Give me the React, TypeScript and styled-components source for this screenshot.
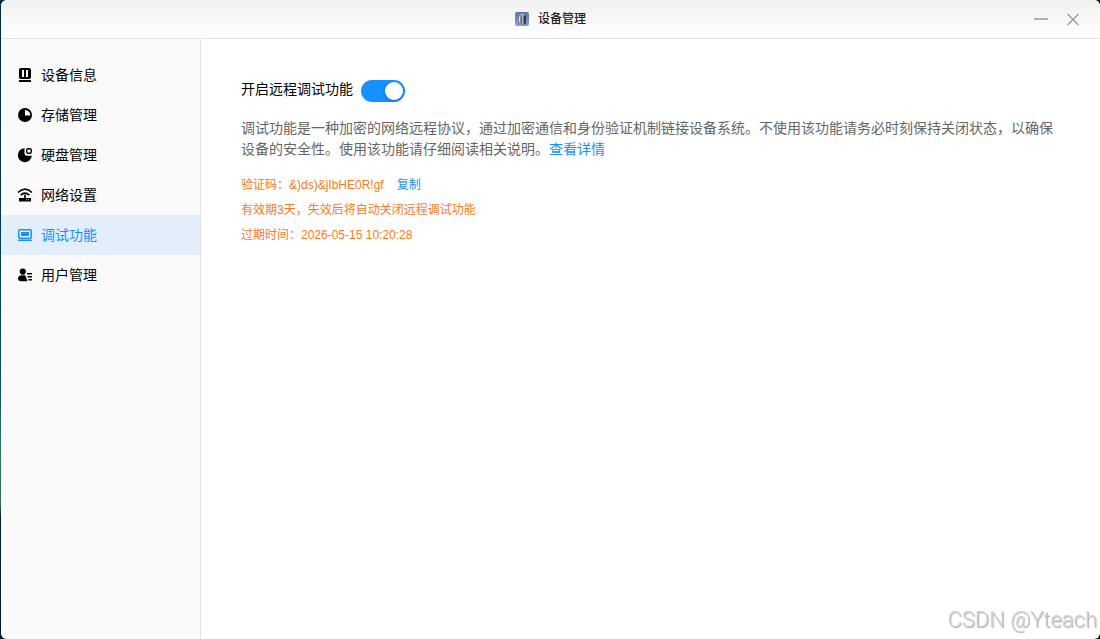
import React, { useState } from "react";
import styled, { createGlobalStyle } from "styled-components";

const GlobalStyle = createGlobalStyle`
  * { box-sizing: border-box; }
  body {
    margin: 0;
    font-family: "Liberation Sans", "Noto Sans CJK SC", sans-serif;
    font-size: 14px;
    color: #000;
  }
  button { font: inherit; border: 0; padding: 0; background: none; cursor: pointer; }
`;

const Desktop = styled.div`
  min-height: 100vh;
  padding-left: 1px;
  display: flex;
  background: linear-gradient(#002b40 0%, #00394c 35%, #0b5560 60%, #2b7566 70%, #2f6f4c 79%, #001f33 81%, #001c30 100%);
`;

const Window = styled.div`
  flex: 1;
  display: flex;
  flex-direction: column;
  overflow: hidden;
  border-radius: 6px;
  background: #fff;
`;

const TitleBar = styled.header`
  display: grid;
  grid-template-columns: 1fr auto 1fr;
  align-items: center;
  height: 39px;
  padding: 0 19px;
  border-bottom: 1px solid #e2e2e2;
  background: linear-gradient(#f1f1f1, #fff);
`;

const Title = styled.h1`
  grid-column: 2;
  display: flex;
  align-items: center;
  gap: 9px;
  margin: 0;
  font-size: 12px;
  line-height: 18px;
  font-weight: 500;
  color: #222;
`;

const WindowActions = styled.div`
  display: flex;
  justify-content: flex-end;
  gap: 16px;
`;

const WindowButton = styled.button`
  display: flex;
  width: 16px;
  height: 16px;
  color: #999;
`;

const Body = styled.div`
  flex: 1;
  display: flex;
`;

const Sidebar = styled.nav`
  flex: 0 0 200px;
  padding-top: 16px;
  border-right: 1px solid #e2e2e2;
  background: #fafafa;
`;

const NavItem = styled.button<{ $active: boolean }>`
  display: flex;
  align-items: center;
  gap: 8px;
  width: 100%;
  height: 40px;
  && { padding-left: 16px; }
  line-height: 20px;
  color: ${(p) => (p.$active ? "#1890ff" : "#000")};
  && { background: ${(p) => (p.$active ? "#e3eefb" : "transparent")}; }
`;

const Content = styled.main`
  flex: 1;
  min-width: 0;
  padding: 40px;
`;

const SwitchRow = styled.label`
  display: flex;
  align-items: flex-start;
  gap: 8px;
  line-height: 20px;
`;

const Switch = styled.input`
  appearance: none;
  width: 44px;
  height: 22px;
  margin: 1px 0 0;
  padding: 2px;
  border-radius: 11px;
  background: #bfbfbf;
  cursor: pointer;
  &::before {
    content: "";
    display: block;
    width: 18px;
    height: 18px;
    border-radius: 50%;
    background: #fff;
    box-shadow: 0 2px 4px rgba(0, 35, 11, 0.2);
  }
  &:checked { background: #1890ff; }
  &:checked::before { margin-left: auto; }
`;

const Description = styled.p`
  margin: 16px 0 0;
  line-height: 21px;
  color: #666;
`;

const Link = styled.a`
  color: #1890ff;
  text-decoration: none;
`;

const Notice = styled.div`
  margin-top: 13px;
  font-size: 12px;
  line-height: 25px;
  color: #ff7a1a;
`;

const NoticeLine = styled.p`
  display: flex;
  gap: 13px;
  margin: 0;
`;

const CopyButton = styled.button`
  color: #1890ff;
`;

const Watermark = styled.div`
  position: fixed;
  right: 3px;
  bottom: 6px;
  font-family: Roboto, sans-serif;
  font-size: 22px;
  line-height: 26px;
  font-weight: 300;
  color: #d2d2d2;
  text-shadow: 1px 1px 1px #aaa;
  pointer-events: none;
`;

const Icon = ({ children }: { children: React.ReactNode }) => (
  <svg width="16" height="16" viewBox="0 0 16 16" fill="currentColor" aria-hidden="true">
    {children}
  </svg>
);

const AppIcon = () => (
  <svg width="14" height="14" viewBox="0 0 14 14" aria-hidden="true">
    <defs>
      <linearGradient id="tile" x1="0" y1="0" x2="0" y2="1">
        <stop offset="0" stopColor="#5877ac" />
        <stop offset="1" stopColor="#88a4d2" />
      </linearGradient>
    </defs>
    <rect width="14" height="14" rx="2" fill="url(#tile)" />
    <path d="M3.500 3 6.500 1.500 11 3v8.500L8 12.800 3.500 10.500z" fill="#343a48" />
    <path d="M3.500 3 6.500 1.500 11 3 8 4z" fill="#b4bac6" />
    <path d="M3.500 3 8 4v8.500L3.500 10.500z" fill="#8d95a5" />
    <path d="M4.500 4.500v5.500" stroke="#e5e8ee" strokeWidth="1" />
    <path d="M6.500 5v5.500" stroke="#596072" strokeWidth="1" />
    <path d="M8 4.200v8.200" stroke="#e3e6ec" strokeWidth=".8" />
  </svg>
);

const items = [
  {
    label: "设备信息",
    icon: (
      <Icon>
        <path fillRule="evenodd" d="M4 1h8a2 2 0 0 1 2 2v7a2 2 0 0 1-2 2H4a2 2 0 0 1-2-2V3a2 2 0 0 1 2-2zm1 2v7h2V3zm4 0v7h2V3z" />
        <rect x="2" y="13" width="12" height="2" />
      </Icon>
    ),
  },
  {
    label: "存储管理",
    icon: (
      <Icon>
        <path fillRule="evenodd" d="M8 1a7 7 0 1 0 0 14A7 7 0 0 0 8 1zm0 2a5.300 5.300 0 0 1 5.300 5.500H8z" />
      </Icon>
    ),
  },
  {
    label: "硬盘管理",
    icon: (
      <Icon>
        <path d="M7.500 1.200a7 7 0 1 0 7.300 7.600H10A2.500 2.500 0 0 1 7.500 6.300z" />
        <rect x="9.700" y="1.700" width="4.600" height="4.600" rx="1.600" fill="none" stroke="currentColor" strokeWidth="1.400" />
      </Icon>
    ),
  },
  {
    label: "网络设置",
    icon: (
      <Icon>
        <path d="M1 5.500Q8-1.300 15 5.500M3.700 8.200Q8 4 12.300 8.200" fill="none" stroke="currentColor" strokeWidth="1.700" />
        <path d="M7.200 7.500h1.600V11H14v3.500H2V11h5.200z" />
        <path d="M9 12.700h1M11 12.700h1" stroke="#fafafa" strokeWidth=".8" />
      </Icon>
    ),
  },
  {
    label: "调试功能",
    icon: (
      <Icon>
        <rect x="1.750" y="2.750" width="12.500" height="8.500" rx="1" fill="none" stroke="currentColor" strokeWidth="1.500" />
        <rect x="4" y="5" width="8" height="4" />
        <rect x="1" y="12.500" width="14" height="1.500" />
      </Icon>
    ),
  },
  {
    label: "用户管理",
    icon: (
      <Icon>
        <circle cx="5.800" cy="4.600" r="3.100" />
        <path d="M1 11.500C1 9.300 2.800 8.300 5 8.300h3.200C9 10 9.500 12 10.500 14.300H4C2.200 14.300 1 13.200 1 11.500z" />
        <path d="M10 6.800h5M10.500 9.800H15M11.500 12.800H15" stroke="currentColor" strokeWidth="1.600" />
      </Icon>
    ),
  },
];

export default function App() {
  const [active, setActive] = useState("调试功能");
  const [enabled, setEnabled] = useState(true);

  return (
    <>
      <GlobalStyle />
      <Desktop>
        <Window>
          <TitleBar>
            <Title>
              <AppIcon />
              设备管理
            </Title>
            <WindowActions>
              <WindowButton aria-label="最小化">
                <Icon>
                  <path d="M1 8h14" stroke="currentColor" strokeWidth="1.400" />
                </Icon>
              </WindowButton>
              <WindowButton aria-label="关闭">
                <Icon>
                  <path d="M2.500 3l11 11M13.500 3l-11 11" stroke="currentColor" strokeWidth="1.300" />
                </Icon>
              </WindowButton>
            </WindowActions>
          </TitleBar>
          <Body>
            <Sidebar>
              {items.map(({ label, icon }) => (
                <NavItem key={label} $active={label === active} onClick={() => setActive(label)}>
                  {icon}
                  {label}
                </NavItem>
              ))}
            </Sidebar>
            <Content>
              <SwitchRow>
                开启远程调试功能
                <Switch type="checkbox" role="switch" checked={enabled} onChange={(e) => setEnabled(e.target.checked)} />
              </SwitchRow>
              <Description>
                调试功能是一种加密的网络远程协议，通过加密通信和身份验证机制链接设备系统。不使用该功能请务必时刻保持关闭状态，以确保设备的安全性。使用该功能请仔细阅读相关说明。
                <Link href="#details">查看详情</Link>
              </Description>
              <Notice>
                <NoticeLine>
                  验证码：&amp;)ds)&amp;jIbHE0R!gf
                  <CopyButton>复制</CopyButton>
                </NoticeLine>
                <NoticeLine>有效期3天，失效后将自动关闭远程调试功能</NoticeLine>
                <NoticeLine>过期时间：2026-05-15 10:20:28</NoticeLine>
              </Notice>
            </Content>
          </Body>
        </Window>
        <Watermark>CSDN @Yteach</Watermark>
      </Desktop>
    </>
  );
}
